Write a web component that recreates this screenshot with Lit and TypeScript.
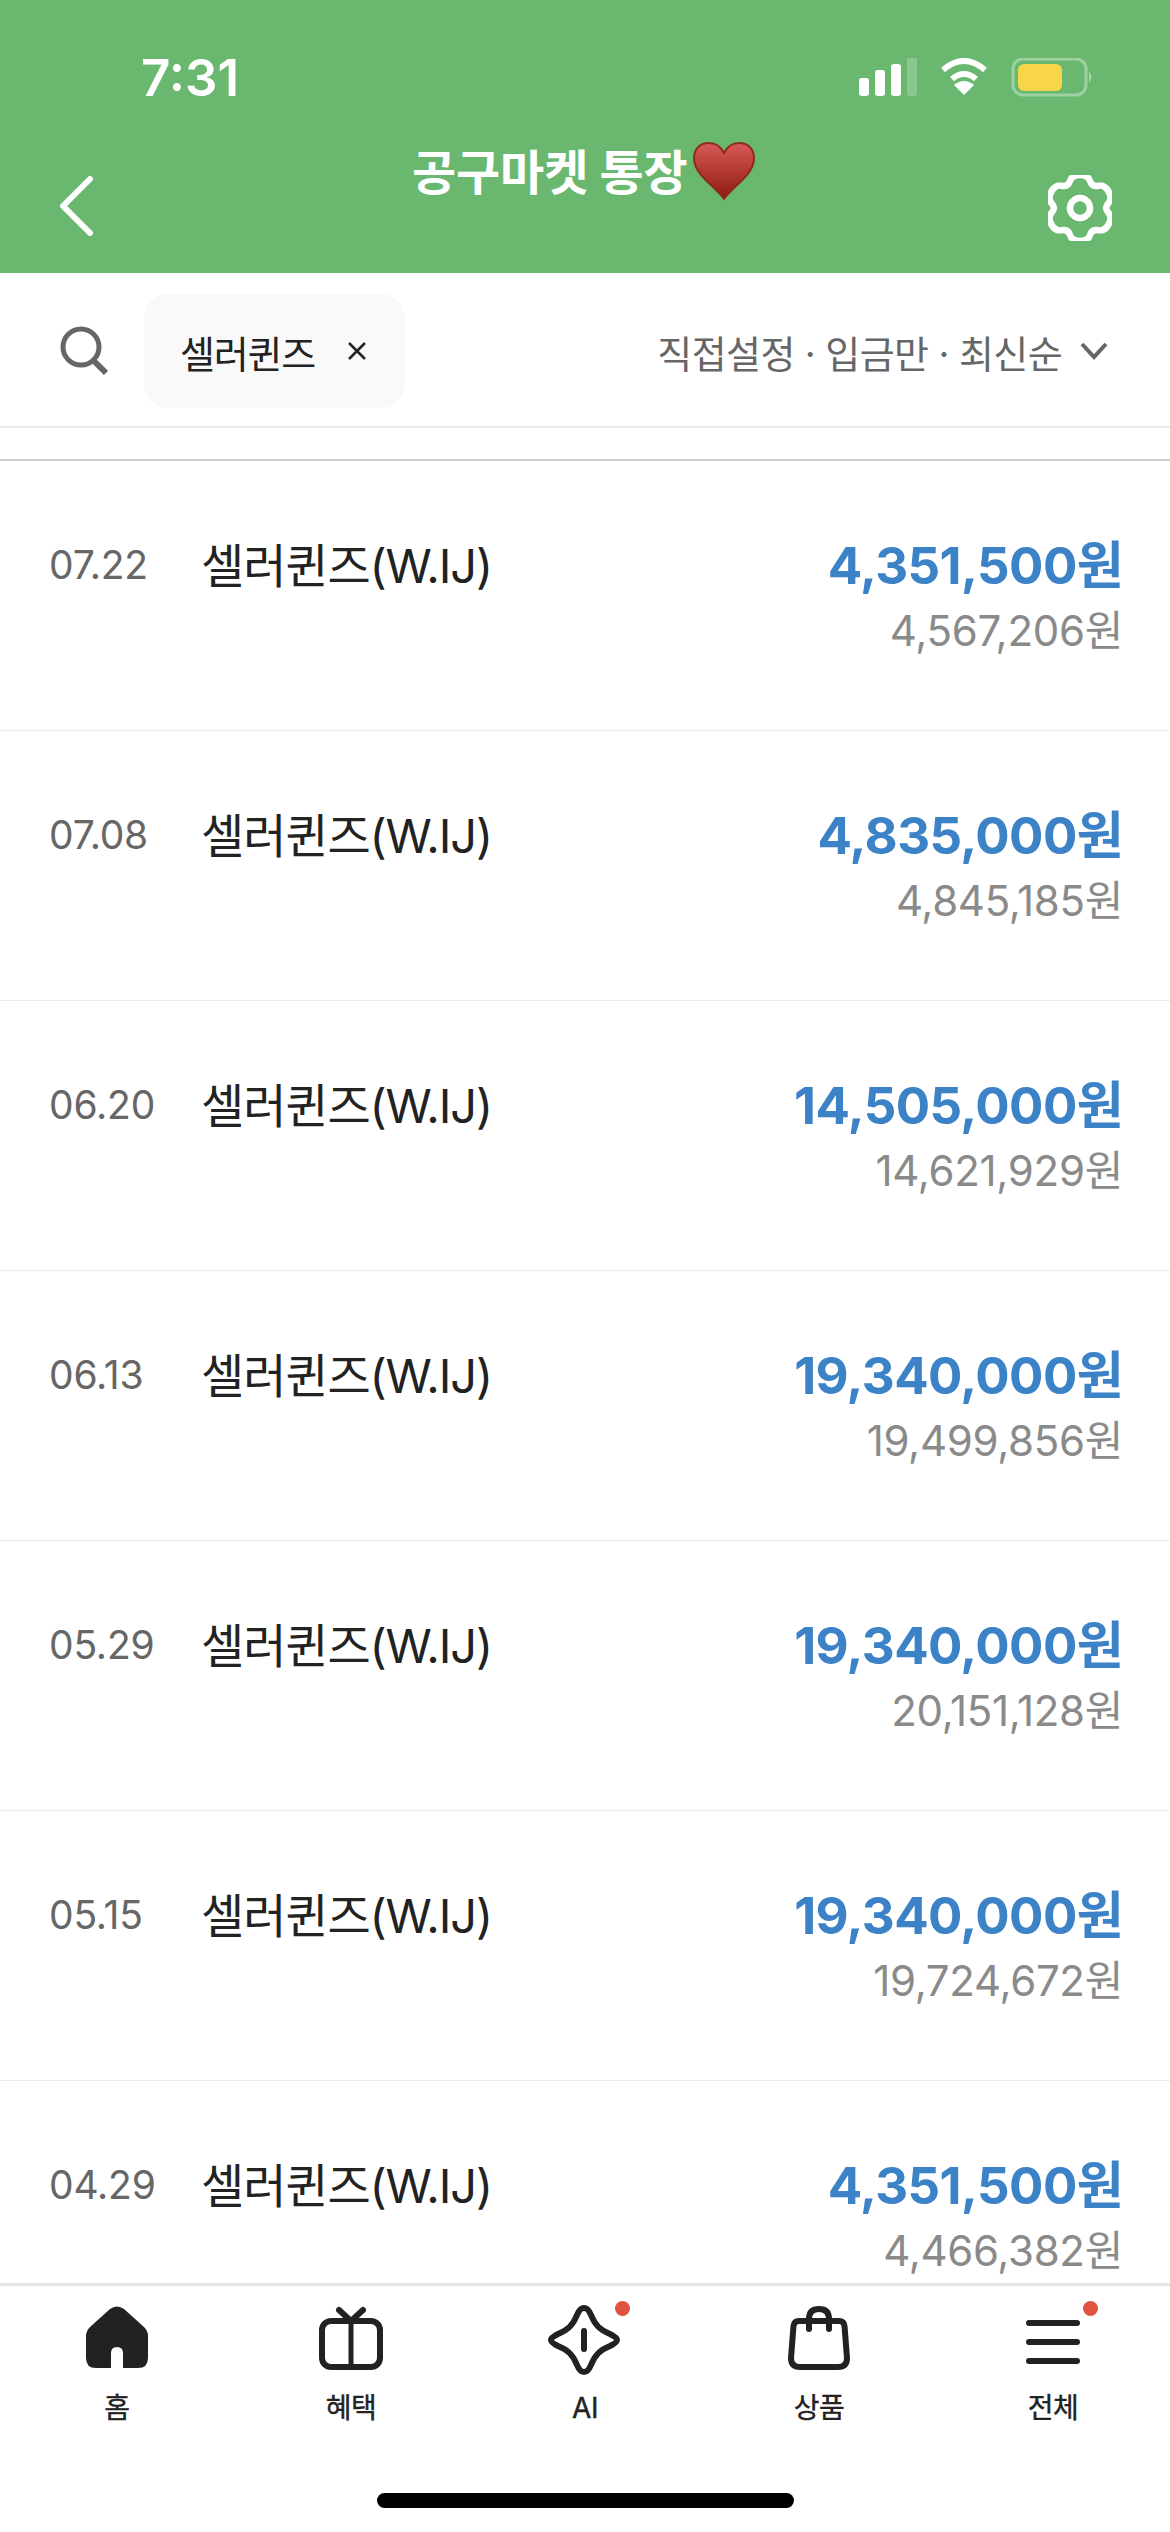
import { LitElement, html, css, svg } from "lit";
import { customElement } from "lit/decorators.js";

const rows = [
  ["07.22", "4,351,500원", "4,567,206원"],
  ["07.08", "4,835,000원", "4,845,185원"],
  ["06.20", "14,505,000원", "14,621,929원"],
  ["06.13", "19,340,000원", "19,499,856원"],
  ["05.29", "19,340,000원", "20,151,128원"],
  ["05.15", "19,340,000원", "19,724,672원"],
  ["04.29", "4,351,500원", "4,466,382원"],
];

function gearPath(cx: number, cy: number, R: number, r: number): string {
  const pts: [number, number][] = [];
  for (let k = 0; k < 6; k++) {
    const a = -90 + 60 * k;
    for (const [d, rad] of [[-14, R], [14, R], [30, r]] as [number, number][]) {
      const t = ((a + d) * Math.PI) / 180;
      pts.push([cx + rad * Math.cos(t), cy + rad * Math.sin(t)]);
    }
  }
  const mid = (p: number[], q: number[]) => [(p[0] + q[0]) / 2, (p[1] + q[1]) / 2];
  const s = mid(pts[pts.length - 1], pts[0]);
  let d = `M${s[0].toFixed(1)} ${s[1].toFixed(1)}`;
  pts.forEach((p, i) => {
    const m = mid(p, pts[(i + 1) % pts.length]);
    d += `Q${p[0].toFixed(1)} ${p[1].toFixed(1)} ${m[0].toFixed(1)} ${m[1].toFixed(1)}`;
  });
  return d + "Z";
}

const navIcons = {
  home: svg`<g transform="translate(3 0)"><path fill="#222" d="M24 3Q31-2 38 3L58 21Q62 25 62 30V52Q62 62 52 62H37V47Q37 41 31 41Q25 41 25 47V62H10Q0 62 0 52V30Q0 25 4 21Z"/></g>`,
  gift: svg`<g transform="translate(2 0)" fill="none" stroke="#222" stroke-width="6" stroke-linecap="round" stroke-linejoin="round"><rect x="3" y="15" width="58" height="46" rx="9"/><path d="M32 15V61" stroke-width="5"/><path d="M20 4L32 15L44 4"/></g>`,
  ai: svg`<g transform="translate(-1 0)" fill="none" stroke="#222" stroke-width="6" stroke-linecap="round" stroke-linejoin="round"><path d="M34 2c3 0 5 2 7 7c4 10 9 15 19 19c4 2 7 4 7 6c0 2-3 4-7 6c-10 4-15 9-19 19c-2 5-4 7-7 7c-3 0-5-2-7-7c-4-10-9-15-19-19c-4-2-7-4-7-6c0-2 3-4 7-6c10-4 15-9 19-19c2-5 4-7 7-7z"/><path d="M34 25V43"/></g>`,
  bag: svg`<g transform="translate(3 0)" fill="none" stroke="#222" stroke-width="6" stroke-linecap="round" stroke-linejoin="round"><path d="M11 15H51Q56 15 56.500 20L59 52Q59 61 50 61H12Q3 61 3 52L5.500 20Q6 15 11 15Z"/><path d="M21 23V13Q21 3 31 3Q41 3 41 13V23"/></g>`,
  menu: svg`<g fill="none" stroke="#222" stroke-width="6" stroke-linecap="round"><path d="M10 17H58M10 36H58M10 55H58"/></g>`,
};

const nav: [keyof typeof navIcons, string, boolean][] = [
  ["home", "홈", false],
  ["gift", "혜택", false],
  ["ai", "AI", true],
  ["bag", "상품", false],
  ["menu", "전체", true],
];

@customElement("app-root")
export class AppRoot extends LitElement {
  static styles = css`
    :host {
      display: block;
      width: 1170px;
      height: 2532px;
      overflow: hidden;
      background: #fff;
      font-family: Inter, "Noto Sans CJK KR", sans-serif;
    }
    .page { display: flex; flex-direction: column; height: 2532px; }
    .top {
      height: 273px;
      flex: none;
      background: #6ab870;
      color: #fff;
      box-sizing: border-box;
      padding: 53px 58px 0 59px;
      position: relative;
    }
    .status { display: flex; align-items: center; justify-content: space-between; height: 50px; padding-left: 82px; margin-right: 17px; }
    .time { font-size: 51px; font-weight: 600; line-height: 50px; font-family: Inter, sans-serif; }
    .status svg { display: block; }
    .bar { display: flex; align-items: flex-start; justify-content: space-between; margin-top: 72px; position: relative; }
    .bar > svg { display: block; }
    .title {
      position: absolute;
      left: 353px;
      top: -37px;
      display: flex;
      align-items: center;
      font-size: 48px;
      font-weight: 700;
      line-height: 70px;
      letter-spacing: -0.1px;
      white-space: nowrap;
    }
    .title svg { display: block; margin-left: 4px; margin-top: -4px; }
    .filter {
      flex: none;
      height: 155px;
      box-sizing: border-box;
      border-bottom: 2px solid #ececec;
      display: flex;
      align-items: flex-start;
      padding: 21px 62px 0 60px;
    }
    .filter .search { display: block; margin-top: 32px; }
    .chip {
      margin-left: 36px;
      width: 261px;
      height: 114px;
      box-sizing: border-box;
      background: #f9f9f9;
      border-radius: 24px;
      display: flex;
      align-items: center;
      padding-left: 36px;
      font-size: 38px;
      color: #222;
      letter-spacing: -1.2px;
    }
    .chip svg { display: block; margin-left: 33px; }
    .opts {
      margin-left: auto;
      height: 114px;
      display: flex;
      align-items: center;
      font-size: 38px;
      color: #666;
      letter-spacing: -0.6px;
      white-space: nowrap;
    }
    .opts svg { display: block; margin-left: 18px; }
    .gap { flex: none; height: 33px; box-sizing: border-box; border-bottom: 2px solid #cfcfcf; }
    .list { flex: 1; overflow: hidden; min-height: 0; }
    .row {
      height: 270px;
      box-sizing: border-box;
      border-bottom: 1px solid #ececec;
      display: flex;
      align-items: flex-start;
      padding: 72px 47px 0 49px;
    }
    .date { width: 152px; flex: none; font-size: 39px; line-height: 64px; color: #666; letter-spacing: -0.2px; }
    .name { font-size: 47px; line-height: 66px; color: #222; letter-spacing: -1.1px; white-space: nowrap; }
    .amt { margin-left: auto; margin-top: 1px; text-align: right; }
    .main { font-size: 51px; font-weight: 700; line-height: 64px; color: #3b82c6; letter-spacing: -0.6px; white-space: nowrap; }
    .sub { font-size: 42px; line-height: 66px; color: #8a8a8a; letter-spacing: -0.3px; white-space: nowrap; }
    .nav {
      flex: none;
      height: 249px;
      box-sizing: border-box;
      border-top: 3px solid #e4e4e4;
      background: #fff;
      display: grid;
      grid-template-columns: repeat(5, 1fr);
      position: relative;
    }
    .item { display: flex; flex-direction: column; align-items: center; padding-top: 20px; font-size: 28px; font-weight: 400; color: #222; }
    .ico { position: relative; width: 68px; height: 70px; display: flex; justify-content: center; align-items: flex-start; }
    .ico svg { display: block; }
    .dot { position: absolute; width: 15px; height: 15px; border-radius: 50%; background: #e25241; left: 64px; top: -5px; }
    .lbl { margin-top: 12px; line-height: 40px; letter-spacing: -0.5px; -webkit-text-stroke: 0.4px #222; }
    .home { position: absolute; left: 377px; top: 207px; width: 417px; height: 15px; border-radius: 8px; background: #000; }
  `;

  render() {
    return html`<div class="page">
      <div class="top">
        <div class="status">
          <div class="time">7:31</div>
          <svg width="236" height="40" viewBox="0 0 236 40">
            <g fill="#fff">
              <rect x="0" y="20" width="10" height="18" rx="3"/>
              <rect x="16" y="12" width="10" height="26" rx="3"/>
              <rect x="32" y="6" width="10" height="32" rx="3"/>
              <rect x="48" y="-1" width="10" height="39" rx="3" opacity=".22"/>
            </g>
            <g fill="none" stroke="#fff" stroke-width="6">
              <path d="M84 12Q105-6 126 12"/>
              <path d="M93 21Q105 11 117 21"/>
            </g>
            <path fill="#fff" d="M105 37L95 27Q105 19 115 27Z"/>
            <rect x="154" y="1" width="73" height="36" rx="10" fill="none" stroke="#fff" stroke-opacity=".35" stroke-width="3"/>
            <rect x="159" y="6" width="44" height="27" rx="6" fill="#f7d648"/>
            <path d="M230 13Q235 19 230 25Z" fill="#fff" fill-opacity=".4"/>
          </svg>
        </div>
        <div class="bar">
          <svg width="36" height="62" viewBox="0 0 36 62" fill="none" stroke="#fff" stroke-width="6" stroke-linecap="round" stroke-linejoin="round"><path d="M31 4L4 31L31 58"/></svg>
          <div class="title">공구마켓 통장<svg width="64" height="60" viewBox="0 0 64 60">
            <defs><linearGradient id="h" x1="0" y1="0" x2="0" y2="1"><stop offset="0" stop-color="#d65a58"/><stop offset="1" stop-color="#8e1a0e"/></linearGradient></defs>
            <path fill="url(#h)" stroke="#8e2a1c" stroke-width="2" d="M32 58C22 44 2 34 2 17C2 7 9 2 17 2C24 2 29 6 32 12C35 6 40 2 47 2C55 2 62 7 62 17C62 34 42 44 32 58Z"/>
          </svg></div>
          <svg width="64" height="66" viewBox="0 0 64 66" fill="none" stroke="#fff" stroke-width="6.500" stroke-linejoin="round"><path d="${gearPath(32, 33, 34, 24)}"/><circle cx="32" cy="33" r="10"/></svg>
        </div>
      </div>
      <div class="filter">
        <svg class="search" width="48" height="50" viewBox="0 0 48 50" fill="none" stroke="#666" stroke-width="5"><circle cx="21" cy="21" r="18"/><path d="M33 34L46 47" stroke-width="6"/></svg>
        <div class="chip">셀러퀸즈<svg width="18" height="18" viewBox="0 0 18 18" stroke="#222" stroke-width="2.500"><path d="M1 1L17 17M17 1L1 17"/></svg></div>
        <div class="opts">직접설정 · 입금만 · 최신순<svg width="28" height="18" viewBox="0 0 28 18" fill="none" stroke="#666" stroke-width="4"><path d="M2 2L14 15L26 2"/></svg></div>
      </div>
      <div class="gap"></div>
      <div class="list">
        ${rows.map(
          ([d, a, b]) => html`<div class="row">
            <div class="date">${d}</div>
            <div class="name">셀러퀸즈(W.IJ)</div>
            <div class="amt"><div class="main">${a}</div><div class="sub">${b}</div></div>
          </div>`
        )}
      </div>
      <div class="nav">
        ${nav.map(
          ([k, l, dot]) => html`<div class="item">
            <div class="ico">
              <svg width="68" height="70" viewBox="0 0 68 70" overflow="visible">${navIcons[k]}</svg>
              ${dot ? html`<span class="dot"></span>` : ""}
            </div>
            <div class="lbl">${l}</div>
          </div>`
        )}
        <div class="home"></div>
      </div>
    </div>`;
  }
}
